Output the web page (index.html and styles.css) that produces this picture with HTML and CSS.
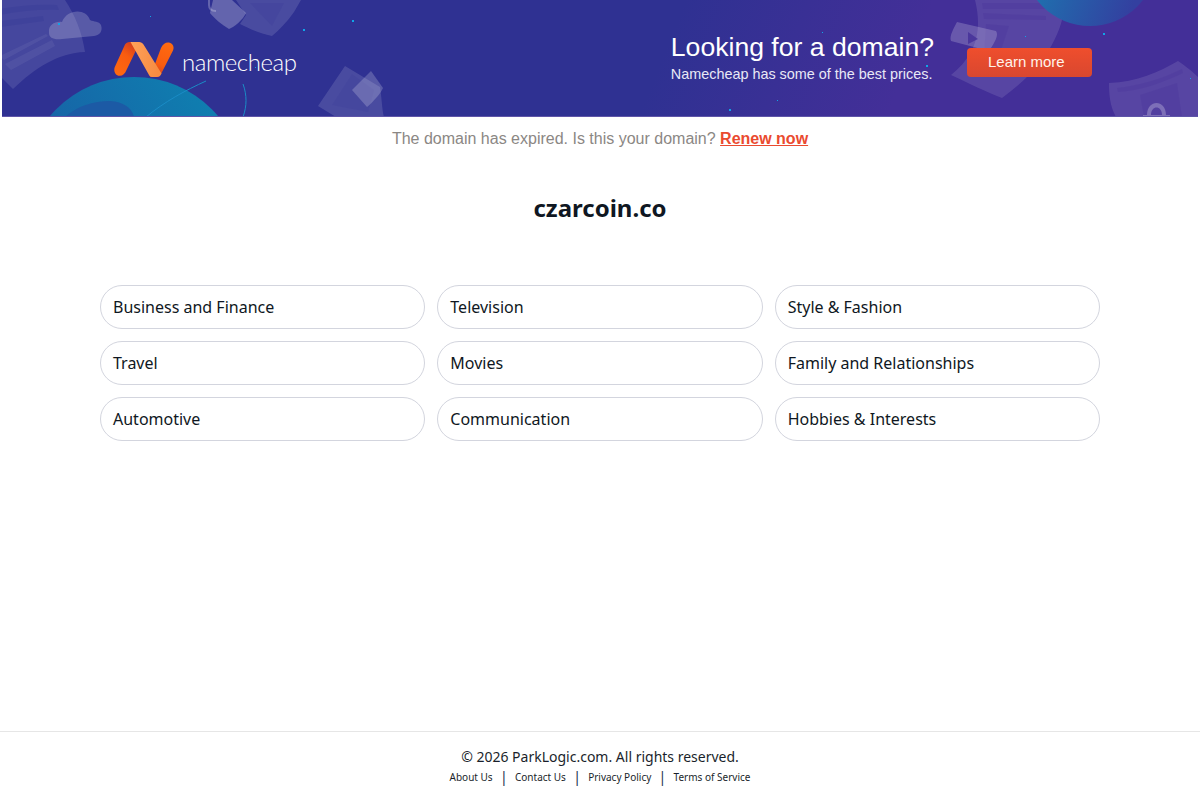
FILE: index.html
```html
<!DOCTYPE html>
<html lang="en">
<head>
<meta charset="utf-8">
<title>czarcoin.co</title>
<link rel="stylesheet" href="styles.css">
</head>
<body>
<div class="page">
  <header class="banner">
    <svg class="banner-art" viewBox="2 0 1196 117" width="1196" height="117" aria-hidden="true">
      <defs>
        <linearGradient id="globe" x1="0" y1="1" x2="1" y2="0.3">
          <stop offset="0" stop-color="#1d4f9f"/><stop offset="1" stop-color="#0f7fb0"/>
        </linearGradient>
        <linearGradient id="globe2" x1="0" y1="0" x2="1" y2="0.4">
          <stop offset="0" stop-color="#1589b6"/><stop offset="1" stop-color="#3340a0"/>
        </linearGradient>
      </defs>
      <!-- top-left document -->
      <path d="M0 0H65C75 15 82 32 85 52C58 53 35 68 13 89L0 76Z" fill="#fff" opacity=".11"/>
      <path d="M0 9C20 5 40 4 57 5L59 10C40 9 20 11 0 15ZM0 21L43 16L44 21L0 27Z" fill="#2f3192" opacity=".22"/>
      <path d="M0 56L46 34L48 36L4 60ZM5 64L52 40L55 46L11 70Z" fill="#fff" opacity=".06"/>
      <path d="M49 33C48 24 56 21 62 22C67 9 86 8 90 20C94 22 99 21 101 25C103 31 100 35 94 36L62 39C54 40 49 38 49 33Z" fill="#fff" opacity=".2"/>
      <!-- top-middle cards -->
      <path d="M236 0H301L294 12C287 22 279 30 272 36C258 33 248 28 240 24L246 15Z" fill="#fff" opacity=".13"/>
      <path d="M250 3H284L272 26Z" fill="#2f3192" opacity=".15"/>
      <path d="M213 0H232L246 13C243 20 234 27 229 29C222 25 214 18 210 13Z" fill="#fff" opacity=".25"/>
      <path d="M209 0V5C209 9 212 11 216 11" fill="none" stroke="#fff" stroke-width="2" opacity=".25"/>
      <!-- globe bottom-left -->
      <circle cx="134" cy="187" r="110" fill="url(#globe)"/>
      <path d="M65 117C76 107 92 101 110 101C124 102 132 108 134 117Z" fill="#1c5aa5"/>
      <path d="M146 117C164 102 186 90 206 81" fill="none" stroke="#1a8cc6" stroke-width="1"/>
      <path d="M243 84C247 95 247 106 243 117" fill="none" stroke="#1a8cc6" stroke-width="1"/>
      <!-- bottom cards -->
      <path d="M345 66L380 87C382 100 382 110 384 117H336L318 106Z" fill="#fff" opacity=".13"/>
      <path d="M352 74L374 90L368 112L332 105Z" fill="#2f3192" opacity=".14"/>
      <path d="M371 71L383 88C381 93 373 102 367 107L352 90Z" fill="#fff" opacity=".2"/>
      <!-- right-hand document -->
      <path d="M975 0H1065C1064 25 1052 62 1002 98C987 92 970 84 951 75C972 58 984 36 975 0Z" fill="#fff" opacity=".11"/>
      <path d="M982 3H1050L1051 9L983 9ZM983 13L1046 16L1046 20L984 19ZM986 24L1009 26L1001 50L984 56Z" fill="#432f98" opacity=".22"/>
      <path d="M957 22L996 31C999 35 995 42 989 51L951 41C949 36 954 28 957 22Z" fill="#fff" opacity=".2"/>
      <path d="M968 32L978 39L968 44Z" fill="#432f98" opacity=".8"/>
      <!-- top-right globe -->
      <circle cx="1090" cy="-41" r="67" fill="url(#globe2)"/>
      <!-- bottom-right document -->
      <path d="M1109 83C1137 82 1159 72 1178 61C1187 67 1194 73 1198 77V117H1116C1110 106 1109 95 1109 83Z" fill="#fff" opacity=".11"/>
      <path d="M1117 88C1137 86 1162 79 1182 69L1183 73C1162 83 1139 91 1118 92ZM1140 95L1177 83L1182 117H1144Z" fill="#432f98" opacity=".22"/>
      <path d="M1143 117V115H1147C1147 99 1166 99 1166 115H1170V117ZM1151 115H1162C1162 105 1151 105 1151 115Z" fill="#fff" opacity=".25"/>
      <!-- sparks -->
      <g fill="#10a5e8">
        <rect x="58" y="23" width="2" height="2"/><rect x="150" y="16" width="1" height="1"/>
        <rect x="303" y="29" width="2" height="2"/><rect x="352" y="20" width="2" height="2"/>
        <rect x="255" y="67" width="1" height="1"/><rect x="729" y="109" width="2" height="2"/>
        <rect x="777" y="100" width="1" height="1"/><rect x="822" y="32" width="1" height="1"/>
        <rect x="926" y="65" width="2" height="2"/><rect x="1103" y="33" width="2" height="2"/>
        <rect x="1025" y="36" width="1" height="1"/><rect x="1190" y="78" width="1" height="1"/>
      </g>
    </svg>
    <a class="brand" href="#">
      <svg class="brand-mark" viewBox="0 0 60 35" width="60" height="35" aria-hidden="true">
        <defs>
          <linearGradient id="mid" x1="0" y1="0" x2="1" y2="0.2">
            <stop offset="0" stop-color="#ffa25a"/><stop offset="1" stop-color="#f68c42"/>
          </linearGradient>
          <linearGradient id="legL" x1="0" y1="1" x2="0.6" y2="0">
            <stop offset="0" stop-color="#ff6a10"/><stop offset=".65" stop-color="#f95c10"/><stop offset="1" stop-color="#d5401e"/>
          </linearGradient>
          <linearGradient id="legR" x1="0.4" y1="1" x2="0.7" y2="0">
            <stop offset="0" stop-color="#d5401e"/><stop offset=".35" stop-color="#f95c10"/><stop offset="1" stop-color="#ff6a10"/>
          </linearGradient>
        </defs>
        <path d="M11 2.500C12 1 13.500 0 15.500 0H26L12.500 28C11 32 8.500 34 5.500 33.800C1.500 33.500 -.8 29 .8 25Z" fill="url(#legL)"/>
        <path d="M47 6C48.500 2 52 0 55 .5C59 1.500 60.500 5 59 8.500L47 32C46 34 44.500 35 42.500 35H36Z" fill="url(#legR)"/>
        <path d="M16.500 0H25C27 0 28.500 1 29.500 2.500L47.500 31.500C46.500 34 45 35 43 35H38C36.500 35 35.500 34.300 35 33Z" fill="url(#mid)"/>
      </svg>
      <span class="brand-name">namecheap</span>
    </a>
    <div class="promo">
      <div class="promo-copy">
        <h2 class="promo-title">Looking for a domain?</h2>
        <p class="promo-text">Namecheap has some of the best prices.</p>
      </div>
      <a class="promo-button" href="#">Learn more</a>
    </div>
  </header>

  <p class="expired">The domain has expired. Is this your domain? <a class="renew" href="#">Renew now</a></p>
  <h1 class="domain">czarcoin.co</h1>

  <nav class="topics">
    <a class="topic" href="#">Business and Finance</a>
    <a class="topic" href="#">Television</a>
    <a class="topic" href="#">Style &amp; Fashion</a>
    <a class="topic" href="#">Travel</a>
    <a class="topic" href="#">Movies</a>
    <a class="topic" href="#">Family and Relationships</a>
    <a class="topic" href="#">Automotive</a>
    <a class="topic" href="#">Communication</a>
    <a class="topic" href="#">Hobbies &amp; Interests</a>
  </nav>

  <footer class="footer">
    <p class="copyright">© 2026 ParkLogic.com. All rights reserved.</p>
    <div class="footer-links">
      <a href="#">About Us</a>
      <span class="footer-sep">|</span>
      <a href="#">Contact Us</a>
      <span class="footer-sep">|</span>
      <a href="#">Privacy Policy</a>
      <span class="footer-sep">|</span>
      <a href="#">Terms of Service</a>
    </div>
  </footer>
</div>
</body>
</html>
```

FILE: styles.css
```css
* { box-sizing: border-box; }
html, body { margin: 0; padding: 0; background: #fff; }
body { font-family: "Noto Sans", sans-serif; color: #0f1722; }
a { color: inherit; text-decoration: none; }

.page { display: flex; flex-direction: column; height: 800px; overflow: hidden; }

.banner {
  position: relative;
  display: flex;
  align-items: flex-start;
  justify-content: space-between;
  flex: none;
  height: 117px;
  margin: 0 2px;
  padding: 0 106px 0 112px;
  overflow: hidden;
  background: linear-gradient(112deg, #2f3192 0%, #2f3192 55%, #432f98 75%, #432f98 100%);
  border-bottom: 1px solid #5f55a8;
}
.banner-art { position: absolute; left: 0; top: 0; }

.brand { position: relative; display: flex; align-items: flex-start; gap: 8px; padding-top: 42px; }
.brand-mark { display: block; }
.brand-name {
  margin-top: 5px;
  font-family: Lato, sans-serif;
  font-weight: 300;
  font-size: 24px;
  line-height: 30px;
  letter-spacing: -.45px;
  color: #fff;
}

.promo { position: relative; display: flex; align-items: flex-start; gap: 33px; padding-top: 32px; }
.promo-copy { font-family: "Liberation Sans", Arial, sans-serif; color: #fff; }
.promo-title { margin: 0; font-size: 26.6px; line-height: 30px; font-weight: 400; }
.promo-text { margin: 3.5px 0 0; font-size: 14.4px; line-height: 17px; color: #e9e8f6; }
.promo-button {
  display: block;
  width: 125px;
  height: 29px;
  margin-top: 16px;
  padding-left: 21px;
  font-family: "Liberation Sans", Arial, sans-serif;
  font-size: 15px;
  line-height: 28px;
  color: #fff3ea;
  background: linear-gradient(#ef4e2d, #d9472f);
  border-radius: 4px;
}

.expired {
  margin: 13px 0 0;
  text-align: center;
  font-family: "Liberation Sans", Arial, sans-serif;
  font-size: 16px;
  line-height: 18px;
  color: #8b8784;
}
.renew { font-weight: 700; color: #ea4a2f; text-decoration: underline; }

.domain {
  margin: 43px 0 0;
  text-align: center;
  font-size: 24px;
  line-height: 33px;
  font-weight: 700;
  color: #0f1722;
}

.topics {
  display: grid;
  grid-template-columns: repeat(3, 1fr);
  gap: 12px;
  width: 1000px;
  margin: 61px auto 0;
}
.topic {
  display: block;
  height: 44px;
  padding: 0 12px;
  font-size: 16px;
  line-height: 42px;
  color: #0f1722;
  background: #fff;
  border: 1px solid #d3d5de;
  border-radius: 22px;
}

.footer {
  margin-top: auto;
  height: 69px;
  padding-top: 15px;
  border-top: 1px solid #e6e6e6;
  text-align: center;
}
.copyright { margin: 0; font-size: 14px; line-height: 20px; color: #1a1f2b; }
.footer-links {
  display: flex;
  justify-content: center;
  align-items: center;
  gap: 7.3px;
  font-size: 10px;
  line-height: 20px;
  color: #1a1f2b;
}
.footer-sep { font-size: 14px; color: #1a2f4f; }
```
